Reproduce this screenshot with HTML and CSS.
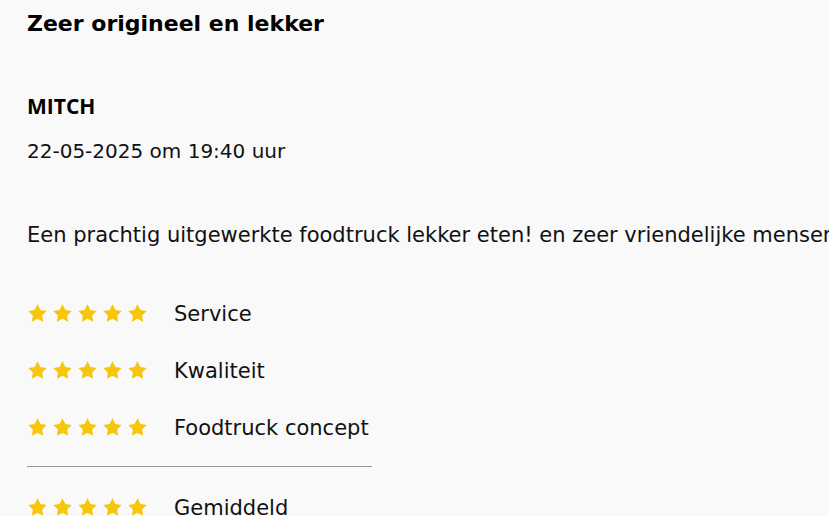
FILE: index.html
```
<!DOCTYPE html>
<html lang="nl">
<head>
    <meta charset="UTF-8">
    <title>Review</title>
    <link rel="stylesheet" href="styles.css">
</head>
<body>
    <div class="review">
        <h2 class="review-title">Zeer origineel en lekker</h2>
        <div class="author">MITCH</div>
        <div class="date">22-05-2025 om 19:40 uur</div>
        <p class="text">Een prachtig uitgewerkte foodtruck lekker eten! en zeer vriendelijke mensen</p>
        <ul class="scores">
            <li>
                <span class="stars">
                    <svg viewBox="0 0 24 24"><path d="M12 1.5l3.3 6.5 7.2 1.1-5.2 5.1 1.2 7.3L12 18.1l-6.5 3.4 1.2-7.3-5.2-5.1 7.2-1.1z"/></svg>
                    <svg viewBox="0 0 24 24"><path d="M12 1.5l3.3 6.5 7.2 1.1-5.2 5.1 1.2 7.3L12 18.1l-6.5 3.4 1.2-7.3-5.2-5.1 7.2-1.1z"/></svg>
                    <svg viewBox="0 0 24 24"><path d="M12 1.5l3.3 6.5 7.2 1.1-5.2 5.1 1.2 7.3L12 18.1l-6.5 3.4 1.2-7.3-5.2-5.1 7.2-1.1z"/></svg>
                    <svg viewBox="0 0 24 24"><path d="M12 1.5l3.3 6.5 7.2 1.1-5.2 5.1 1.2 7.3L12 18.1l-6.5 3.4 1.2-7.3-5.2-5.1 7.2-1.1z"/></svg>
                    <svg viewBox="0 0 24 24"><path d="M12 1.5l3.3 6.5 7.2 1.1-5.2 5.1 1.2 7.3L12 18.1l-6.5 3.4 1.2-7.3-5.2-5.1 7.2-1.1z"/></svg>
                </span>
                <span class="label">Service</span>
            </li>
            <li>
                <span class="stars">
                    <svg viewBox="0 0 24 24"><path d="M12 1.5l3.3 6.5 7.2 1.1-5.2 5.1 1.2 7.3L12 18.1l-6.5 3.4 1.2-7.3-5.2-5.1 7.2-1.1z"/></svg>
                    <svg viewBox="0 0 24 24"><path d="M12 1.5l3.3 6.5 7.2 1.1-5.2 5.1 1.2 7.3L12 18.1l-6.5 3.4 1.2-7.3-5.2-5.1 7.2-1.1z"/></svg>
                    <svg viewBox="0 0 24 24"><path d="M12 1.5l3.3 6.5 7.2 1.1-5.2 5.1 1.2 7.3L12 18.1l-6.5 3.4 1.2-7.3-5.2-5.1 7.2-1.1z"/></svg>
                    <svg viewBox="0 0 24 24"><path d="M12 1.5l3.3 6.5 7.2 1.1-5.2 5.1 1.2 7.3L12 18.1l-6.5 3.4 1.2-7.3-5.2-5.1 7.2-1.1z"/></svg>
                    <svg viewBox="0 0 24 24"><path d="M12 1.5l3.3 6.5 7.2 1.1-5.2 5.1 1.2 7.3L12 18.1l-6.5 3.4 1.2-7.3-5.2-5.1 7.2-1.1z"/></svg>
                </span>
                <span class="label">Kwaliteit</span>
            </li>
            <li>
                <span class="stars">
                    <svg viewBox="0 0 24 24"><path d="M12 1.5l3.3 6.5 7.2 1.1-5.2 5.1 1.2 7.3L12 18.1l-6.5 3.4 1.2-7.3-5.2-5.1 7.2-1.1z"/></svg>
                    <svg viewBox="0 0 24 24"><path d="M12 1.5l3.3 6.5 7.2 1.1-5.2 5.1 1.2 7.3L12 18.1l-6.5 3.4 1.2-7.3-5.2-5.1 7.2-1.1z"/></svg>
                    <svg viewBox="0 0 24 24"><path d="M12 1.5l3.3 6.5 7.2 1.1-5.2 5.1 1.2 7.3L12 18.1l-6.5 3.4 1.2-7.3-5.2-5.1 7.2-1.1z"/></svg>
                    <svg viewBox="0 0 24 24"><path d="M12 1.5l3.3 6.5 7.2 1.1-5.2 5.1 1.2 7.3L12 18.1l-6.5 3.4 1.2-7.3-5.2-5.1 7.2-1.1z"/></svg>
                    <svg viewBox="0 0 24 24"><path d="M12 1.5l3.3 6.5 7.2 1.1-5.2 5.1 1.2 7.3L12 18.1l-6.5 3.4 1.2-7.3-5.2-5.1 7.2-1.1z"/></svg>
                </span>
                <span class="label">Foodtruck concept</span>
            </li>
        </ul>
        <div class="divider"></div>
        <ul class="scores total">
            <li>
                <span class="stars">
                    <svg viewBox="0 0 24 24"><path d="M12 1.5l3.3 6.5 7.2 1.1-5.2 5.1 1.2 7.3L12 18.1l-6.5 3.4 1.2-7.3-5.2-5.1 7.2-1.1z"/></svg>
                    <svg viewBox="0 0 24 24"><path d="M12 1.5l3.3 6.5 7.2 1.1-5.2 5.1 1.2 7.3L12 18.1l-6.5 3.4 1.2-7.3-5.2-5.1 7.2-1.1z"/></svg>
                    <svg viewBox="0 0 24 24"><path d="M12 1.5l3.3 6.5 7.2 1.1-5.2 5.1 1.2 7.3L12 18.1l-6.5 3.4 1.2-7.3-5.2-5.1 7.2-1.1z"/></svg>
                    <svg viewBox="0 0 24 24"><path d="M12 1.5l3.3 6.5 7.2 1.1-5.2 5.1 1.2 7.3L12 18.1l-6.5 3.4 1.2-7.3-5.2-5.1 7.2-1.1z"/></svg>
                    <svg viewBox="0 0 24 24"><path d="M12 1.5l3.3 6.5 7.2 1.1-5.2 5.1 1.2 7.3L12 18.1l-6.5 3.4 1.2-7.3-5.2-5.1 7.2-1.1z"/></svg>
                </span>
                <span class="label">Gemiddeld</span>
            </li>
        </ul>
    </div>
</body>
</html>
```

FILE: styles.css
```
body,
h2,
p,
ul {
    margin: 0;
    padding: 0;
}

ul {
    list-style: none;
}

body {
    background: #f9f9f9;
    color: #111;
    font-family: "DejaVu Sans", sans-serif;
    overflow: hidden;
}

.review {
    padding: 9px 0 0 27px;
}

.review-title {
    font-size: 22px;
    line-height: 30px;
    font-weight: bold;
    color: #000;
}

.author {
    margin-top: 52px;
    font-family: "Open Sans", sans-serif;
    font-size: 21px;
    font-weight: bold;
    line-height: 30px;
    color: #000;
}

.date {
    margin-top: 17px;
    font-size: 20px;
    line-height: 26px;
}

.text {
    margin-top: 58px;
    font-size: 21px;
    line-height: 26px;
    white-space: nowrap;
}

.scores {
    margin-top: 37px;
}

.scores.total {
    margin-top: 0;
}

.scores li {
    display: flex;
    align-items: center;
    gap: 26px;
    height: 57px;
    font-size: 21px;
}

.stars {
    display: flex;
    gap: 4px;
}

.stars svg {
    width: 21px;
    height: 21px;
    fill: #f5c60c;
}

.divider {
    width: 345px;
    height: 1px;
    background: #999;
    margin: 10px 0 12px;
}
```
